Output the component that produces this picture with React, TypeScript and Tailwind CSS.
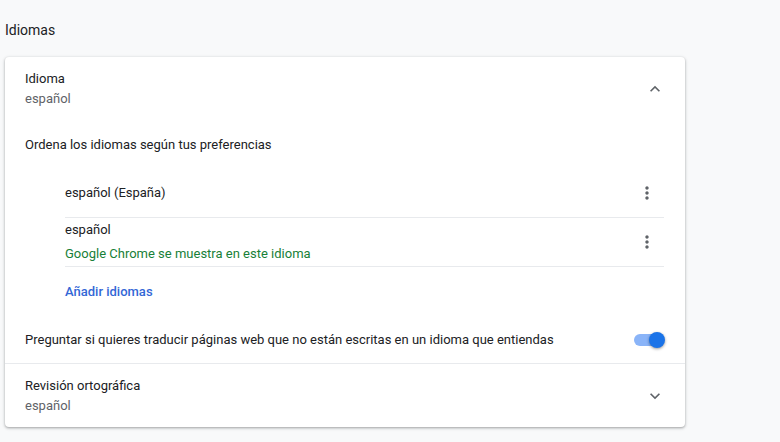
import React from "react";

function ChevronUp() {
  return (
    <svg width="20" height="20" viewBox="0 0 24 24" fill="#5f6368">
      <path d="M7.41 15.41 12 10.83l4.59 4.58L18 14l-6-6-6 6z" />
    </svg>
  );
}
function ChevronDown() {
  return (
    <svg width="20" height="20" viewBox="0 0 24 24" fill="#5f6368">
      <path d="M7.41 8.59 12 13.17l4.59-4.58L18 10l-6 6-6-6z" />
    </svg>
  );
}
function Kebab() {
  return (
    <svg width="20" height="20" viewBox="0 0 24 24" fill="#5f6368">
      <path d="M12 8c1.1 0 2-.9 2-2s-.9-2-2-2-2 .9-2 2 .9 2 2 2zm0 2c-1.1 0-2 .9-2 2s.9 2 2 2 2-.9 2-2-.9-2-2-2zm0 6c-1.1 0-2 .9-2 2s.9 2 2 2 2-.9 2-2-.9-2-2-2z" />
    </svg>
  );
}

export default function App() {
  return (
    <div
      className="w-[780px] h-[442px] bg-[#f8f9fa] overflow-hidden text-[13px] text-[#202124]"
      style={{ fontFamily: "Roboto, 'Noto Sans', sans-serif" }}
    >
      <div className="pl-[5px] w-[685px]">
        <div className="pt-[21px] h-[57px] text-[14px] leading-[18px] text-[#202124]">Idiomas</div>
        <div className="bg-white rounded-[4px] shadow-[0_1px_2px_0_rgba(60,64,67,0.3),0_1px_3px_1px_rgba(60,64,67,0.15)]">
          <div className="h-[64px] flex items-center pl-5 pr-5">
            <div className="flex-1 leading-[20px]">
              <div>Idioma</div>
              <div className="text-[#5f6368]">español</div>
            </div>
            <ChevronUp />
          </div>
          <div className="h-[48px] flex items-center pl-5 leading-[20px]">
            Ordena los idiomas según tus preferencias
          </div>
          <div className="ml-[60px] mr-[21px]">
            <div className="h-[49px] flex items-center border-b border-[#e8eaed]">
              <div className="flex-1">español (España)</div>
              <div className="mr-[7px]">
                <Kebab />
              </div>
            </div>
            <div className="h-[49px] flex items-center border-b border-[#e8eaed]">
              <div className="flex-1 leading-[20px] flex flex-col gap-[4px]">
                <div>español</div>
                <div className="text-[#188038]">Google Chrome se muestra en este idioma</div>
              </div>
              <div className="mr-[7px]">
                <Kebab />
              </div>
            </div>
            <div className="h-[50px] flex items-center font-medium text-[#3367d6]">Añadir idiomas</div>
          </div>
          <div className="h-[47px] flex items-center pl-5 pr-[20px] border-b border-[#e8eaed]">
            <div className="flex-1">
              Preguntar si quieres traducir páginas web que no están escritas en un idioma que entiendas
            </div>
            <div className="relative w-[32px] h-[16px] flex items-center">
              <div className="w-[28px] h-[12px] rounded-full bg-[#8ab4f8] ml-[1px]" />
              <div className="absolute right-0 top-0 w-[16px] h-[16px] rounded-full bg-[#1a73e8] shadow-[0_1px_3px_0_rgba(0,0,0,0.4)]" />
            </div>
          </div>
          <div className="h-[63px] pt-[1px] flex items-center pl-5 pr-5">
            <div className="flex-1 leading-[20px]">
              <div>Revisión ortográfica</div>
              <div className="text-[#5f6368]">español</div>
            </div>
            <ChevronDown />
          </div>
        </div>
      </div>
    </div>
  );
}
